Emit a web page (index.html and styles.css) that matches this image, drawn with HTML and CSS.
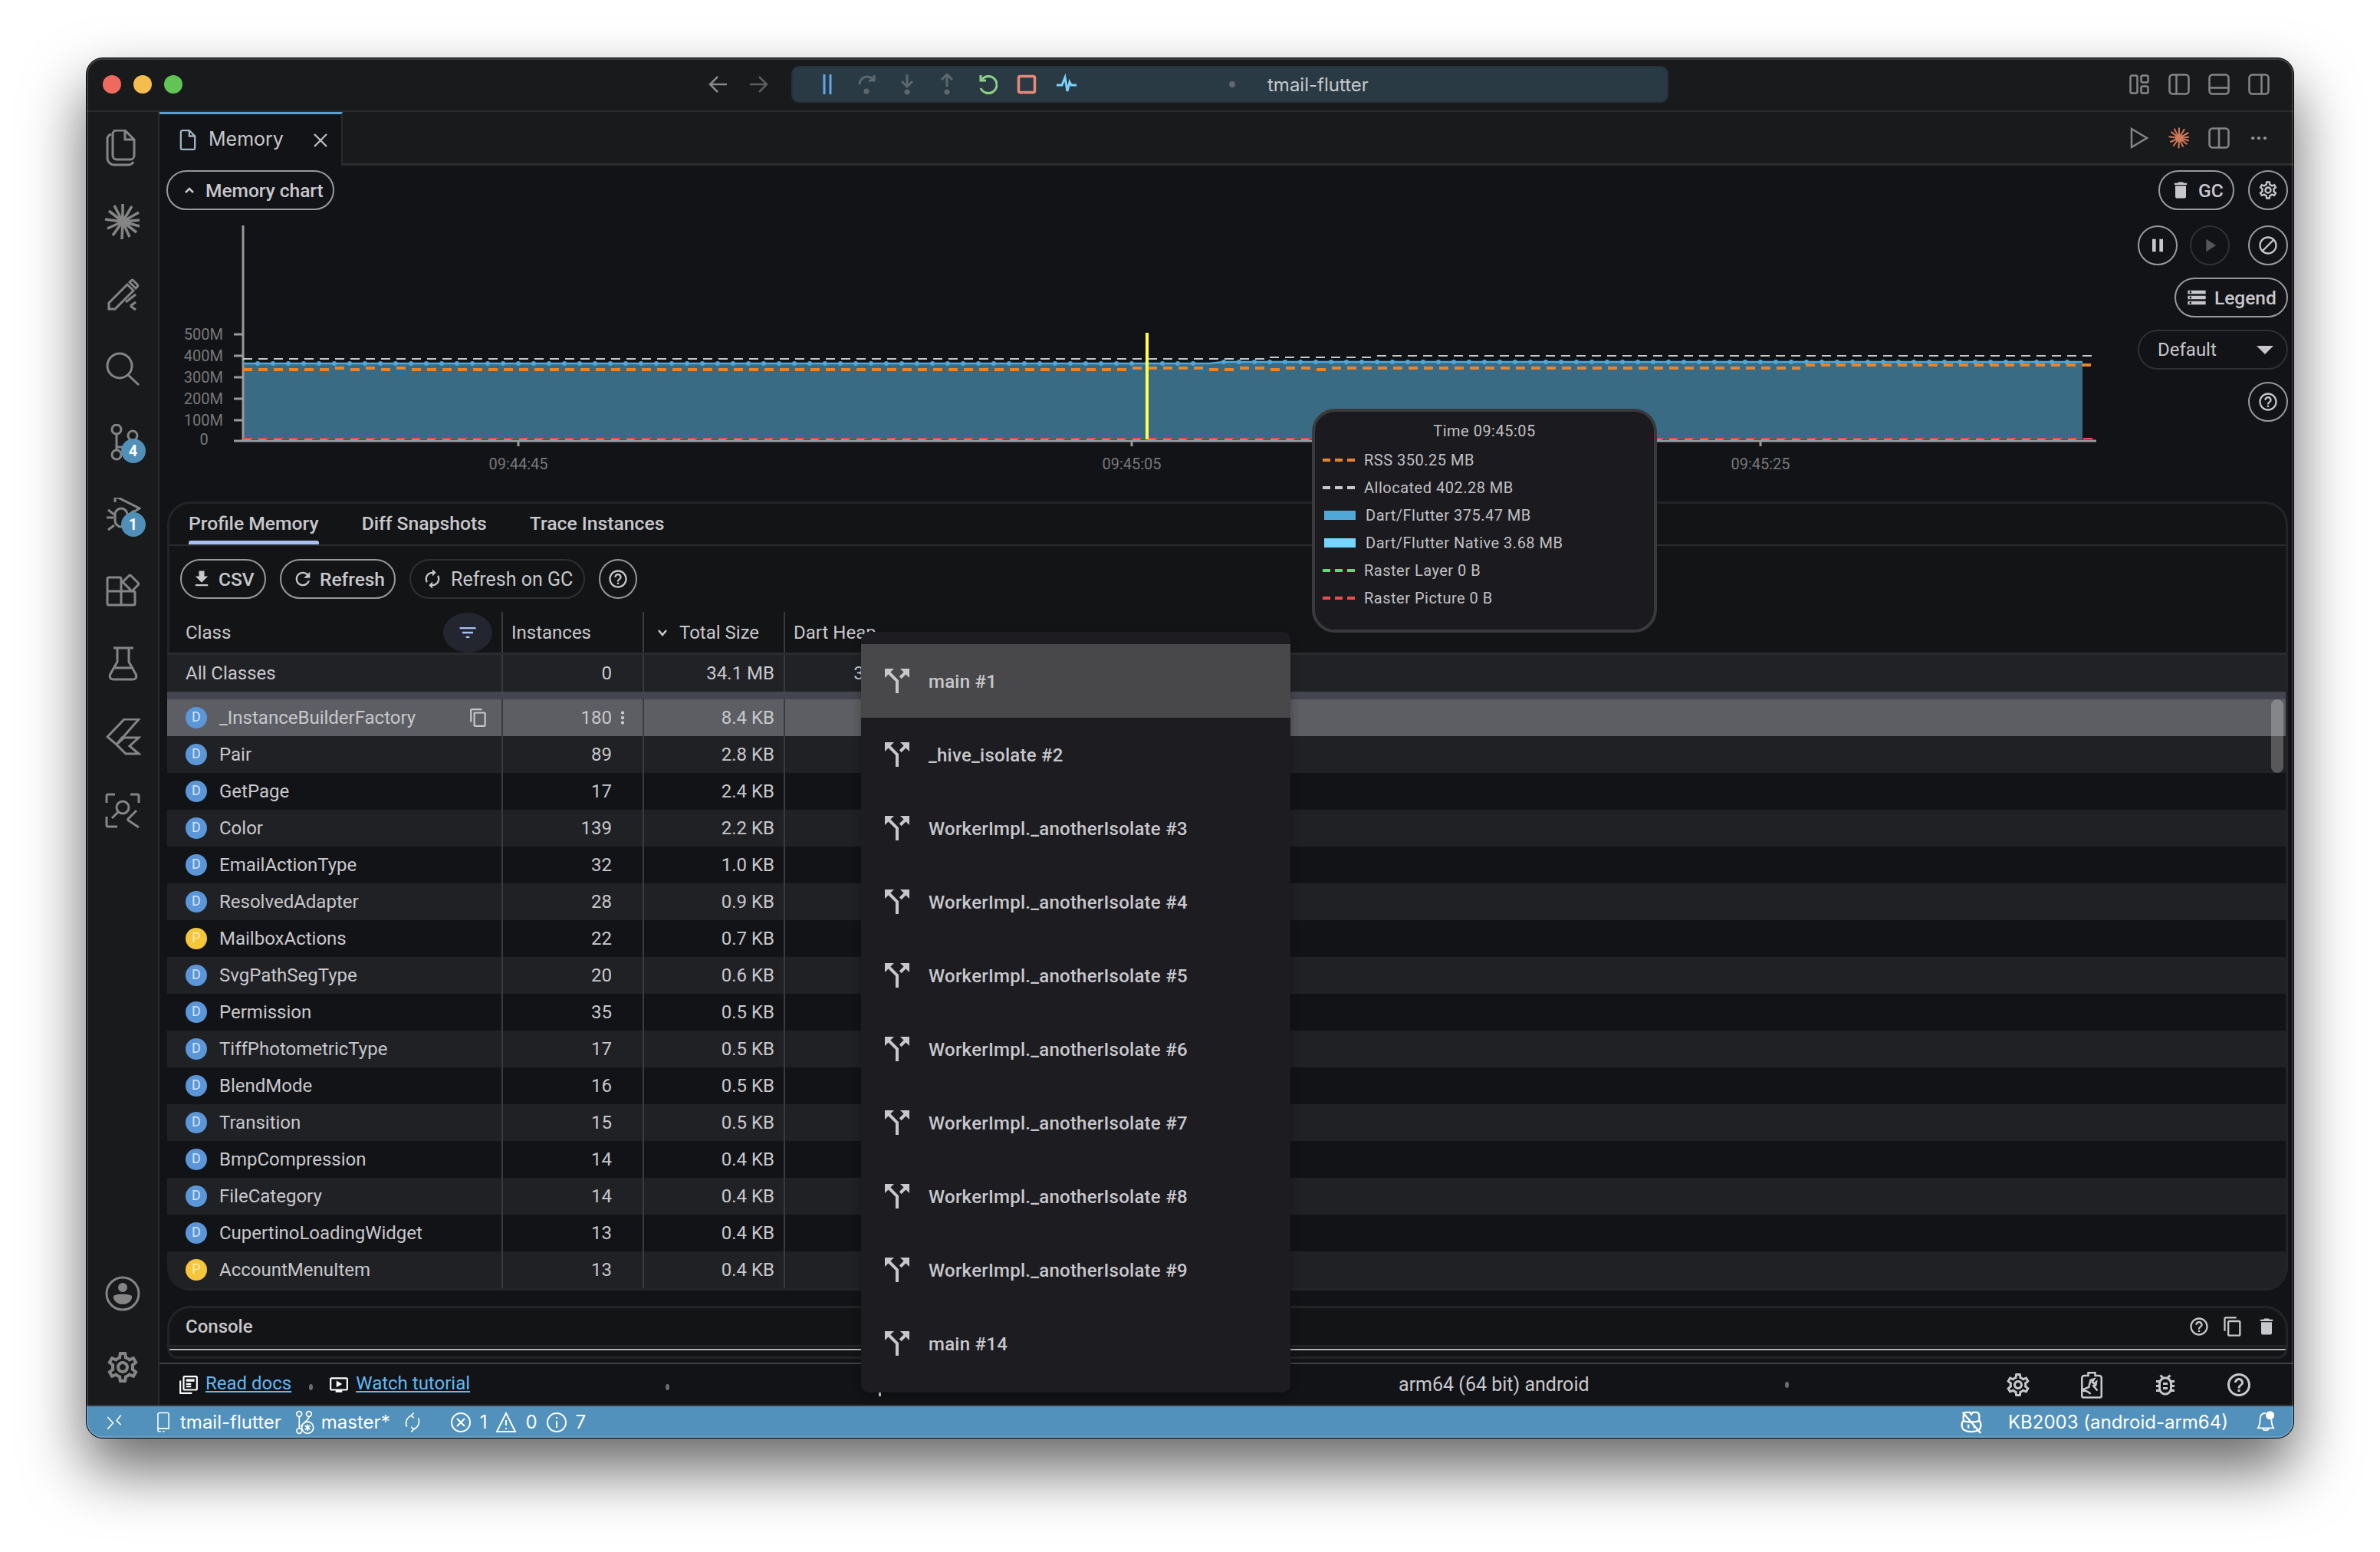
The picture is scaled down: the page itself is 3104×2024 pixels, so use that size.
FILE: index.html
```html
<!DOCTYPE html>
<html lang="en">
<head>
    <title>Memory - tmail-flutter</title>
    <link rel="stylesheet" href="styles.css">
</head>
<body>
    <!-- icon sprite -->
    <svg class="sprite" xmlns="http://www.w3.org/2000/svg">
        <symbol id="m-split" viewBox="0 0 24 24"><path d="M14 4l2.29 2.29-2.88 2.88 1.42 1.42 2.88-2.88L20 10V4zm-4 0H4v6l2.29-2.29 4.71 4.7V20h2v-8.41l-5.29-5.3z"/></symbol>
        <symbol id="m-download" viewBox="0 0 24 24"><path d="M19 9h-4V3H9v6H5l7 7 7-7zM5 18v2h14v-2H5z"/></symbol>
        <symbol id="m-refresh" viewBox="0 0 24 24"><path d="M17.65 6.35C16.2 4.9 14.21 4 12 4c-4.42 0-7.99 3.58-7.99 8s3.57 8 7.99 8c3.73 0 6.84-2.55 7.73-6h-2.08c-.82 2.33-3.04 4-5.65 4-3.31 0-6-2.69-6-6s2.69-6 6-6c1.66 0 3.14.69 4.22 1.78L13 11h7V4l-2.35 2.35z"/></symbol>
        <symbol id="m-renew" viewBox="0 0 24 24"><path d="M12 6v3l4-4-4-4v3c-4.42 0-8 3.58-8 8 0 1.57.46 3.03 1.24 4.26L6.7 14.8c-.45-.83-.7-1.79-.7-2.8 0-3.31 2.69-6 6-6zm6.76 1.74L17.3 9.2c.44.84.7 1.79.7 2.8 0 3.31-2.69 6-6 6v-3l-4 4 4 4v-3c4.42 0 8-3.58 8-8 0-1.57-.46-3.03-1.24-4.26z"/></symbol>
        <symbol id="m-help" viewBox="0 0 24 24"><path d="M11 18h2v-2h-2v2zm1-16C6.48 2 2 6.48 2 12s4.48 10 10 10 10-4.48 10-10S17.52 2 12 2zm0 18c-4.41 0-8-3.59-8-8s3.59-8 8-8 8 3.59 8 8-3.59 8-8 8zm0-14c-2.21 0-4 1.79-4 4h2c0-1.1.9-2 2-2s2 .9 2 2c0 2-3 1.75-3 5h2c0-2.25 3-2.5 3-5 0-2.21-1.79-4-4-4z"/></symbol>
        <symbol id="m-gear" viewBox="0 0 24 24"><path d="M19.43 12.98c.04-.32.07-.64.07-.98 0-.34-.03-.66-.07-.98l2.11-1.65c.19-.15.24-.42.12-.64l-2-3.46c-.09-.16-.26-.25-.44-.25-.06 0-.12.01-.17.03l-2.49 1c-.52-.4-1.08-.73-1.69-.98l-.38-2.65C14.46 2.18 14.25 2 14 2h-4c-.25 0-.46.18-.49.42l-.38 2.65c-.61.25-1.17.59-1.69.98l-2.49-1c-.06-.02-.12-.03-.18-.03-.17 0-.34.09-.43.25l-2 3.46c-.13.22-.07.49.12.64l2.11 1.65c-.04.32-.07.65-.07.98 0 .33.03.66.07.98l-2.11 1.65c-.19.15-.24.42-.12.64l2 3.46c.09.16.26.25.44.25.06 0 .12-.01.17-.03l2.49-1c.52.4 1.08.73 1.69.98l.38 2.65c.03.24.24.42.49.42h4c.25 0 .46-.18.49-.42l.38-2.65c.61-.25 1.17-.59 1.69-.98l2.49 1c.06.02.12.03.18.03.17 0 .34-.09.43-.25l2-3.46c.12-.22.07-.49-.12-.64l-2.11-1.65zm-1.98-1.71c.04.31.05.52.05.73 0 .21-.02.43-.05.73l-.14 1.13.89.7 1.08.84-.7 1.21-1.27-.51-1.04-.42-.9.68c-.43.32-.84.56-1.25.73l-1.06.43-.16 1.13-.2 1.35h-1.4l-.19-1.35-.16-1.13-1.06-.43c-.43-.18-.83-.41-1.23-.71l-.91-.7-1.06.43-1.27.51-.7-1.21 1.08-.84.89-.7-.14-1.13c-.03-.31-.05-.54-.05-.74s.02-.43.05-.73l.14-1.13-.89-.7-1.08-.84.7-1.21 1.27.51 1.04.42.9-.68c.43-.32.84-.56 1.25-.73l1.06-.43.16-1.13.2-1.35h1.39l.19 1.35.16 1.13 1.06.43c.43.18.83.41 1.23.71l.91.7 1.06-.43 1.27-.51.7 1.21-1.07.85-.89.7.14 1.13zM12 8c-2.21 0-4 1.79-4 4s1.79 4 4 4 4-1.79 4-4-1.79-4-4-4zm0 6c-1.1 0-2-.9-2-2s.9-2 2-2 2 .9 2 2-.9 2-2 2z"/></symbol>
        <symbol id="m-delete" viewBox="0 0 24 24"><path d="M6 19c0 1.1.9 2 2 2h8c1.1 0 2-.9 2-2V7H6v12zM19 4h-3.5l-1-1h-5l-1 1H5v2h14V4z"/></symbol>
        <symbol id="m-copy" viewBox="0 0 24 24"><path d="M16 1H4c-1.1 0-2 .9-2 2v14h2V3h12V1zm3 4H8c-1.1 0-2 .9-2 2v14c0 1.1.9 2 2 2h11c1.1 0 2-.9 2-2V7c0-1.1-.9-2-2-2zm0 16H8V7h11v14z"/></symbol>
        <symbol id="m-pause" viewBox="0 0 24 24"><path d="M6 19h4V5H6v14zm8-14v14h4V5h-4z"/></symbol>
        <symbol id="m-play" viewBox="0 0 24 24"><path d="M8 5v14l11-7z"/></symbol>
        <symbol id="m-block" viewBox="0 0 24 24"><path d="M12 2C6.48 2 2 6.48 2 12s4.48 10 10 10 10-4.48 10-10S17.52 2 12 2zM4 12c0-4.42 3.58-8 8-8 1.85 0 3.55.63 4.9 1.69L5.69 16.9C4.63 15.55 4 13.85 4 12zm8 8c-1.85 0-3.55-.63-4.9-1.69L18.31 7.1C19.37 8.45 20 10.15 20 12c0 4.42-3.58 8-8 8z"/></symbol>
        <symbol id="m-storage" viewBox="0 0 24 24"><path d="M2 20h20v-4H2v4zm2-3h2v2H4v-2zM2 4v4h20V4H2zm4 3H4V5h2v2zm-4 7h20v-4H2v4zm2-3h2v2H4v-2z"/></symbol>
        <symbol id="m-filter" viewBox="0 0 24 24"><path d="M10 18h4v-2h-4v2zM3 6v2h18V6H3zm3 7h12v-2H6v2z"/></symbol>
        <symbol id="m-more" viewBox="0 0 24 24"><path d="M12 8c1.1 0 2-.9 2-2s-.9-2-2-2-2 .9-2 2 .9 2 2 2zm0 2c-1.1 0-2 .9-2 2s.9 2 2 2 2-.9 2-2-.9-2-2-2zm0 6c-1.1 0-2 .9-2 2s.9 2 2 2 2-.9 2-2-.9-2-2-2z"/></symbol>
        <symbol id="m-docs" viewBox="0 0 24 24"><path d="M3 7H1v15c0 .6.4 1 1 1h14v-2H3V7zm18-6H7c-1.1 0-2 .9-2 2v14c0 1.1.9 2 2 2h14c1.1 0 2-.9 2-2V3c0-1.1-.9-2-2-2zm0 16H7V3h14v14zM9 5h10v3H9V5zm0 5h6v2H9v-2zm0 3h6v2H9v-2z"/></symbol>
        <symbol id="m-video" viewBox="0 0 24 24"><path d="M21 3H3c-1.1 0-2 .9-2 2v12c0 1.1.9 2 2 2h5v2h8v-2h5c1.1 0 2-.9 2-2V5c0-1.1-.9-2-2-2zm0 14H3V5h18v12zm-5-6l-7 4V7l7 4z"/></symbol>
        <symbol id="m-bug" viewBox="0 0 24 24"><path d="M20 8h-2.81c-.45-.78-1.07-1.45-1.82-1.96L17 4.41 15.59 3l-2.17 2.17C12.96 5.06 12.49 5 12 5c-.49 0-.96.06-1.41.17L8.41 3 7 4.41l1.62 1.63C7.88 6.55 7.26 7.22 6.81 8H4v2h2.09c-.05.33-.09.66-.09 1v1H4v2h2v1c0 .34.04.67.09 1H4v2h2.81c1.04 1.79 2.97 3 5.19 3s4.15-1.21 5.19-3H20v-2h-2.09c.05-.33.09-.66.09-1v-1h2v-2h-2v-1c0-.34-.04-.67-.09-1H20V8zm-4 7c0 2.21-1.79 4-4 4s-4-1.79-4-4v-4c0-2.21 1.79-4 4-4s4 1.79 4 4v4zm-6-1h4v2h-4v-2zm0-4h4v2h-4v-2z"/></symbol>
    </svg>

    <div class="window">
        <header class="titlebar">
            <div class="lights">
                <span class="light red"></span>
                <span class="light yellow"></span>
                <span class="light green"></span>
            </div>
            <div class="nav">
                <svg class="nav-arrow" viewBox="0 0 26 26"><path d="M24 13H3M12 3L2 13l10 10"/></svg>
                <svg class="nav-arrow dim" viewBox="0 0 26 26"><path d="M2 13h21M14 3l10 10-10 10"/></svg>
            </div>
            <div class="command-center">
                <div class="debug-tools">
                    <svg class="dbg" viewBox="0 0 28 28"><path class="blue" d="M10 1v26M18 1v26"/></svg>
                    <svg class="dbg" viewBox="0 0 28 28"><path class="off" d="M4 14a10 10 0 0 1 18-6M23 2v7h-7"/><circle class="off-dot" cx="13" cy="23" r="3.500"/></svg>
                    <svg class="dbg" viewBox="0 0 28 28"><path class="off" d="M14 1v15M7 10l7 7 7-7"/><circle class="off-dot" cx="14" cy="24" r="3.500"/></svg>
                    <svg class="dbg" viewBox="0 0 28 28"><path class="off" d="M14 17V2M7 8l7-7 7 7"/><circle class="off-dot" cx="14" cy="24" r="3.500"/></svg>
                    <svg class="dbg" viewBox="0 0 28 28"><path class="green-stroke" d="M8 7a11 11 0 1 1-2 12M6 2v7h7"/></svg>
                    <svg class="dbg" viewBox="0 0 28 28"><rect class="stop" x="3.500" y="3.500" width="21" height="21" rx="2"/></svg>
                    <svg class="dbg" viewBox="0 0 28 28"><path class="pulse" d="M1 15h7l4-10 3 18 3-12 2 4h7"/></svg>
                </div>
                <span class="cc-dot"></span>
                <span class="cc-title">tmail-flutter</span>
            </div>
            <div class="layout-icons">
                <svg class="win-icon" viewBox="0 0 28 28"><path d="M2.500 4.500a2 2 0 0 1 2-2h5a2 2 0 0 1 2 2v19a2 2 0 0 1-2 2h-5a2 2 0 0 1-2-2zM16.500 4.500a2 2 0 0 1 2-2h5a2 2 0 0 1 2 2v5a2 2 0 0 1-2 2h-5a2 2 0 0 1-2-2zM16.500 18.500a2 2 0 0 1 2-2h5a2 2 0 0 1 2 2v5a2 2 0 0 1-2 2h-5a2 2 0 0 1-2-2z"/></svg>
                <svg class="win-icon" viewBox="0 0 28 28"><rect x="1.500" y="1.500" width="25" height="25" rx="4"/><path d="M10.500 2v24"/></svg>
                <svg class="win-icon" viewBox="0 0 28 28"><rect x="1.500" y="1.500" width="25" height="25" rx="4"/><path d="M2 18.500h24"/></svg>
                <svg class="win-icon" viewBox="0 0 28 28"><rect x="1.500" y="1.500" width="25" height="25" rx="4"/><path d="M17.500 2v24"/></svg>
            </div>
        </header>

        <div class="workbench">
            <nav class="activity-bar">
                <svg class="act" viewBox="0 0 48 48"><path d="M16 1h11l12 12v21a5 5 0 0 1-5 5H16a5 5 0 0 1-5-5V6a5 5 0 0 1 5-5zM27 1v12h12M9 6a7 7 0 0 0-5 7v24a9 9 0 0 0 9 9h18a8 8 0 0 0 7-4"/></svg>
                <svg class="act" viewBox="0 0 48 48"><path class="rays" d="M24 24L46 22M24 24L45 12M24 24L36 4M24 24L24 1M24 24L13 3M24 24L6 10M24 24L1 21M24 24L4 33M24 24L11 42M24 24L23 47M24 24L33 44M24 24L42 38M24 24L46 30"/><circle class="fill-gray" cx="24" cy="24" r="6"/></svg>
                <svg class="act" viewBox="0 0 48 48"><path d="M6 42v-8L30 10l8 8-24 24zM33 7l2-2a2 2 0 0 1 3 0l5 5a2 2 0 0 1 0 3l-2 2zM28 33l13-10M34 38l7-5M34 38l7 5"/></svg>
                <svg class="act" viewBox="0 0 48 48"><circle cx="20" cy="20" r="16"/><path d="M31 32l14 13"/></svg>
                <div class="act-slot">
                    <svg class="act" viewBox="0 0 48 48"><circle cx="16" cy="7" r="6"/><circle cx="37" cy="15" r="6"/><circle cx="16" cy="40" r="6"/><path d="M16 13v21M16 30h14l5-9"/></svg>
                    <span class="act-badge">4</span>
                </div>
                <div class="act-slot">
                    <svg class="act" viewBox="0 0 48 48"><path d="M14 6V0h4l28 14-10 6M14 22a8 8 0 0 1 16 0v8a8 8 0 0 1-16 0zM3 26h9M5 16l8 6M5 42l8-6M32 22l7-5M33 26h8"/></svg>
                    <span class="act-badge">1</span>
                </div>
                <svg class="act" viewBox="0 0 48 48"><path d="M6 8h14a2 2 0 0 1 2 2v16H6a2 2 0 0 1-2-2V10a2 2 0 0 1 2-2zM4 26v16a2 2 0 0 0 2 2h16V26zM22 26h16a2 2 0 0 1 2 2v14a2 2 0 0 1-2 2H22zM24 14l8-8a2 2 0 0 1 3 0l9 9a2 2 0 0 1 0 3l-8 8z"/></svg>
                <svg class="act" viewBox="0 0 48 48"><path d="M12 4h26M17 4v18L8 38c-2 4 0 7 4 7h25c4 0 6-3 4-7l-9-16V4M13 30h24"/></svg>
                <svg class="act" viewBox="0 0 48 48"><path d="M4 24L26 1h19L16 34zM16 34l10-9h19L33 36l12 10H28zM16 34l8-10"/></svg>
                <svg class="act" viewBox="0 0 48 48"><path d="M3 14V5a2 2 0 0 1 2-2h9M34 3h9a2 2 0 0 1 2 2v9M3 32v11a2 2 0 0 0 2 2h12"/><circle cx="24" cy="20" r="8"/><path d="M18 26L10 34M42 24L30 36M36 40l-6-4M36 40l9 6"/></svg>
                <div class="act-spacer"></div>
                <svg class="act" viewBox="0 0 48 48"><circle cx="24" cy="24" r="21"/><circle class="fill-gray" cx="24" cy="16" r="6"/><path class="fill-gray" d="M12 27c4-3 20-3 24 0 1 6-5 11-12 11s-13-5-12-11z"/></svg>
                <svg class="act gear-act" viewBox="0 0 24 24"><use href="#m-gear"/></svg>
            </nav>

            <main class="editor">
                <div class="tab-row">
                    <div class="tab">
                        <svg class="tab-file" viewBox="0 0 24 30"><path d="M4 1h10l8 8v17a2 2 0 0 1-2 2H4a2 2 0 0 1-2-2V3a2 2 0 0 1 2-2zM14 1v8h8"/></svg>
                        <span class="tab-label">Memory</span>
                        <svg class="tab-close" viewBox="0 0 20 20"><path d="M2 2l16 16M18 2L2 18"/></svg>
                    </div>
                    <div class="tab-actions">
                        <svg class="win-icon" viewBox="0 0 28 28"><path d="M4 2v24l20-12z"/></svg>
                        <svg class="star-orange" viewBox="0 0 48 48"><path d="M24 24L46 22M24 24L45 12M24 24L36 4M24 24L24 1M24 24L13 3M24 24L6 10M24 24L1 21M24 24L4 33M24 24L11 42M24 24L23 47M24 24L33 44M24 24L42 38M24 24L46 30"/><circle cx="24" cy="24" r="7"/></svg>
                        <svg class="win-icon" viewBox="0 0 28 28"><rect x="1.500" y="1.500" width="25" height="25" rx="4"/><path d="M14 2v24"/></svg>
                        <span class="more-dots">···</span>
                    </div>
                </div>

                <section class="chart-section">
                    <div class="chart-main">
                        <button class="pill chart-toggle">
                            <svg class="chev" viewBox="0 0 16 16"><path d="M3 11l5-5 5 5"/></svg>
                            Memory chart
                        </button>
                        <svg class="chart" viewBox="217 294 2565 350" width="2565" height="350">
                            <polygon class="area" points="317,474 1577,474 1595,472 2716,472 2716,573 317,573"/>
                            <!-- axes -->
                            <path class="axis" d="M317 294V576M305 575H2734M305 436h12M305 464h12M305 492h12M305 520h12M305 548h12"/>
                            <path class="xtick" d="M676 576v6M1476 576v6M2296 576v6"/>
                            <!-- series -->
                            <path class="dash-white" d="M317 468H1656M1656 466H1796M1796 464H2728"/>
                            <path class="line-blue" d="M317 474H1577L1595 472H2716"/>
                            <path class="dots-blue" d="M336 474H1576M1596 472H2716"/>
                            <path class="dash-orange" d="M317 482H437M437 480H457M457 482H477M477 480H497M497 482H517M517 480H537M537 482H1477M1477 480H1577M1577 482H1617M1617 480H1657M1657 482H1677M1677 480H1717M1717 482H1737M1737 480H2348M2355 476H2728"/>
                            <path class="dash-native" d="M317 573H2716"/>
                            <path class="dash-red" d="M317 572H2734"/>
                            <rect class="hover-line" x="1494" y="434" width="4" height="139"/>
                            <!-- labels -->
                            <text class="tick-label" x="291" y="443" text-anchor="end">500M</text>
                            <text class="tick-label" x="291" y="471" text-anchor="end">400M</text>
                            <text class="tick-label" x="291" y="499" text-anchor="end">300M</text>
                            <text class="tick-label" x="291" y="527" text-anchor="end">200M</text>
                            <text class="tick-label" x="291" y="555" text-anchor="end">100M</text>
                            <text class="tick-label" x="266" y="580" text-anchor="middle">0</text>
                            <text class="tick-label" x="676" y="612" text-anchor="middle">09:44:45</text>
                            <text class="tick-label" x="1476" y="612" text-anchor="middle">09:45:05</text>
                            <text class="tick-label" x="2296" y="612" text-anchor="middle">09:45:25</text>
                        </svg>
                    </div>
                    <div class="chart-controls">
                        <div class="ctrl-row">
                            <button class="pill gc-btn"><svg class="m-icon" viewBox="0 0 24 24"><use href="#m-delete"/></svg>GC</button>
                            <button class="round"><svg class="m-icon" viewBox="0 0 24 24"><use href="#m-gear"/></svg></button>
                        </div>
                        <div class="ctrl-row three">
                            <button class="round"><svg class="m-icon" viewBox="0 0 24 24"><use href="#m-pause"/></svg></button>
                            <button class="round disabled"><svg class="m-icon" viewBox="0 0 24 24"><use href="#m-play"/></svg></button>
                            <button class="round last"><svg class="m-icon" viewBox="0 0 24 24"><use href="#m-block"/></svg></button>
                        </div>
                        <div class="ctrl-row">
                            <button class="pill legend-btn"><svg class="m-icon" viewBox="0 0 24 24"><use href="#m-storage"/></svg>Legend</button>
                        </div>
                        <div class="ctrl-row">
                            <div class="dropdown"><span>Default</span><span class="caret"></span></div>
                        </div>
                        <div class="ctrl-row">
                            <button class="round"><svg class="m-icon" viewBox="0 0 24 24"><use href="#m-help"/></svg></button>
                        </div>
                    </div>
                </section>

                <section class="panel profile">
                    <div class="panel-tabs">
                        <span class="panel-tab active">Profile Memory</span>
                        <span class="panel-tab">Diff Snapshots</span>
                        <span class="panel-tab">Trace Instances</span>
                    </div>
                    <div class="toolbar">
                        <button class="pill csv-btn"><svg class="m-icon" viewBox="0 0 24 24"><use href="#m-download"/></svg>CSV</button>
                        <button class="pill refresh-btn"><svg class="m-icon" viewBox="0 0 24 24"><use href="#m-refresh"/></svg>Refresh</button>
                        <button class="pill dark-pill gcr-btn"><svg class="m-icon" viewBox="0 0 24 24"><use href="#m-renew"/></svg>Refresh on GC</button>
                        <button class="round"><svg class="m-icon" viewBox="0 0 24 24"><use href="#m-help"/></svg></button>
                    </div>
                    <div class="table">
                        <div class="row head">
                            <div class="cell class-cell">Class<span class="filter-btn"><svg class="m-icon" viewBox="0 0 24 24"><use href="#m-filter"/></svg></span></div>
                            <div class="cell head-left">Instances</div>
                            <div class="cell head-left sort"><svg class="sort-chev" viewBox="0 0 16 16"><path d="M3 5l5 6 5-6"/></svg>Total Size</div>
                            <div class="cell head-left">Dart Heap</div>
                        </div>
                        <div class="row total">
                            <div class="cell class-cell">All Classes</div>
                            <div class="cell num">0</div>
                            <div class="cell num">34.1 MB</div>
                            <div class="cell num heap">34.1 MB</div>
                        </div>
                        <div class="band"></div>
                        <div class="rows">
                            <div class="scroll-thumb"></div>
                            <div class="row selected">
                                <div class="cell class-cell"><span class="lib dart">D</span>_InstanceBuilderFactory<svg class="copy-icon" viewBox="0 0 24 24"><use href="#m-copy"/></svg></div>
                                <div class="cell num">180<svg class="kebab" viewBox="0 0 24 24"><use href="#m-more"/></svg></div>
                                <div class="cell num">8.4 KB</div>
                                <div class="cell"></div>
                            </div>
                            <div class="row"><div class="cell class-cell"><span class="lib dart">D</span>Pair</div><div class="cell num">89</div><div class="cell num">2.8 KB</div><div class="cell"></div></div>
                            <div class="row"><div class="cell class-cell"><span class="lib dart">D</span>GetPage</div><div class="cell num">17</div><div class="cell num">2.4 KB</div><div class="cell"></div></div>
                            <div class="row"><div class="cell class-cell"><span class="lib dart">D</span>Color</div><div class="cell num">139</div><div class="cell num">2.2 KB</div><div class="cell"></div></div>
                            <div class="row"><div class="cell class-cell"><span class="lib dart">D</span>EmailActionType</div><div class="cell num">32</div><div class="cell num">1.0 KB</div><div class="cell"></div></div>
                            <div class="row"><div class="cell class-cell"><span class="lib dart">D</span>ResolvedAdapter</div><div class="cell num">28</div><div class="cell num">0.9 KB</div><div class="cell"></div></div>
                            <div class="row"><div class="cell class-cell"><span class="lib pkg">P</span>MailboxActions</div><div class="cell num">22</div><div class="cell num">0.7 KB</div><div class="cell"></div></div>
                            <div class="row"><div class="cell class-cell"><span class="lib dart">D</span>SvgPathSegType</div><div class="cell num">20</div><div class="cell num">0.6 KB</div><div class="cell"></div></div>
                            <div class="row"><div class="cell class-cell"><span class="lib dart">D</span>Permission</div><div class="cell num">35</div><div class="cell num">0.5 KB</div><div class="cell"></div></div>
                            <div class="row"><div class="cell class-cell"><span class="lib dart">D</span>TiffPhotometricType</div><div class="cell num">17</div><div class="cell num">0.5 KB</div><div class="cell"></div></div>
                            <div class="row"><div class="cell class-cell"><span class="lib dart">D</span>BlendMode</div><div class="cell num">16</div><div class="cell num">0.5 KB</div><div class="cell"></div></div>
                            <div class="row"><div class="cell class-cell"><span class="lib dart">D</span>Transition</div><div class="cell num">15</div><div class="cell num">0.5 KB</div><div class="cell"></div></div>
                            <div class="row"><div class="cell class-cell"><span class="lib dart">D</span>BmpCompression</div><div class="cell num">14</div><div class="cell num">0.4 KB</div><div class="cell"></div></div>
                            <div class="row"><div class="cell class-cell"><span class="lib dart">D</span>FileCategory</div><div class="cell num">14</div><div class="cell num">0.4 KB</div><div class="cell"></div></div>
                            <div class="row"><div class="cell class-cell"><span class="lib dart">D</span>CupertinoLoadingWidget</div><div class="cell num">13</div><div class="cell num">0.4 KB</div><div class="cell"></div></div>
                            <div class="row"><div class="cell class-cell"><span class="lib pkg">P</span>AccountMenuItem</div><div class="cell num">13</div><div class="cell num">0.4 KB</div><div class="cell"></div></div>
                        </div>
                    </div>
                </section>

                <section class="panel console">
                    <div class="console-head">
                        <span class="console-title">Console</span>
                        <div class="console-icons">
                            <svg class="m-icon" viewBox="0 0 24 24"><use href="#m-help"/></svg>
                            <svg class="m-icon" viewBox="0 0 24 24"><use href="#m-copy"/></svg>
                            <svg class="m-icon" viewBox="0 0 24 24"><use href="#m-delete"/></svg>
                        </div>
                    </div>
                    <div class="console-rule"></div>
                </section>

                <footer class="devtools-footer">
                    <svg class="foot-icon" viewBox="0 0 24 24"><use href="#m-docs"/></svg>
                    <a class="foot-link docs">Read docs</a>
                    <span class="foot-dot d1"></span>
                    <svg class="foot-icon" viewBox="0 0 24 24"><use href="#m-video"/></svg>
                    <a class="foot-link tutorial">Watch tutorial</a>
                    <span class="foot-dot d2"></span>
                    <span class="foot-tick"></span>
                    <span class="foot-device">arm64 (64 bit) android</span>
                    <span class="foot-dot d3"></span>
                    <div class="foot-tools">
                        <svg class="m-icon" viewBox="0 0 24 24"><use href="#m-gear"/></svg>
                        <svg class="tool-outline" viewBox="0 0 24 24"><path d="M9 1.500h6v2.500h3.500a2 2 0 0 1 2 2v15.500a1.500 1.500 0 0 1-1.500 1.500H5a1.500 1.500 0 0 1-1.500-1.500V6a2 2 0 0 1 2-2H9zM3.500 16.500l6-2.500 1.500-6 3-1-1.500 2.500 1.500 1.500 2-1.500-.5 3-2 .5 3.500 4M3.500 17c3 0 6 1 7.500 3"/></svg>
                        <svg class="m-icon" viewBox="0 0 24 24"><use href="#m-bug"/></svg>
                        <svg class="m-icon" viewBox="0 0 24 24"><use href="#m-help"/></svg>
                    </div>
                </footer>
            </main>
        </div>

        <div class="statusbar">
            <svg class="st-icon remote" viewBox="0 0 28 28"><path d="M3 5l9 10-9 10M25 2l-7 9 7 7"/></svg>
            <svg class="st-icon device" viewBox="0 0 28 34"><path d="M8 1h13a2 2 0 0 1 2 2v24H5V3a3 3 0 0 1 3-2zM5 27v3a2 2 0 0 0 2 2h3M13 32h3"/></svg>
            <span class="st-text project">tmail-flutter</span>
            <svg class="st-icon branch" viewBox="0 0 30 38"><circle cx="7" cy="6" r="4"/><circle cx="22" cy="6" r="4"/><circle cx="7" cy="32" r="4"/><path d="M7 10v18M22 10c0 6-8 8-13 16"/><circle class="star-bg" cx="20" cy="27" r="9"/><path class="star-cut" d="M20 22v10M16 24l8 6M24 24l-8 6"/></svg>
            <span class="st-text branch-name">master*</span>
            <svg class="st-icon sync" viewBox="0 0 28 34"><path d="M16 2l-4 4 4 4M5 24A13 13 0 0 1 13 6M12 32l4-4-4-4M23 10a13 13 0 0 1-8 18"/></svg>
            <svg class="st-icon problem p-err" viewBox="0 0 28 28"><circle cx="14" cy="14" r="12"/><path d="M9 9l10 10M19 9L9 19"/></svg>
            <span class="st-text count">1</span>
            <svg class="st-icon problem" viewBox="0 0 28 28"><path d="M14 2l12 24H2zM14 11v7M14 21v2"/></svg>
            <span class="st-text count">0</span>
            <svg class="st-icon problem" viewBox="0 0 28 28"><circle cx="14" cy="14" r="12"/><path d="M14 12v9M14 7v2"/></svg>
            <span class="st-text count">7</span>
            <div class="st-right">
                <svg class="st-icon copilot" viewBox="0 0 32 32"><path d="M9 2h5l2 3 2-3h5c3 0 4 3 4 6v6c3 2 3 9 0 12-6 4-16 4-22 0-3-3-3-10 0-12V8c0-3 1-6 4-6zM4 2l25 29M5 14c6 2 16 2 22 0M12 19v5M20 19v5"/></svg>
                <span class="st-text device-name">KB2003 (android-arm64)</span>
                <svg class="st-icon bell" viewBox="0 0 28 34"><path d="M14 4C8 4 6 8 6 13c0 6-1 9-3 12h22c-2-3-3-6-3-12M10 25c0 4 8 4 8 0"/><circle class="bell-dot" cx="20" cy="7" r="6"/></svg>
            </div>
        </div>

        <!-- floating things -->
        <div class="chart-tooltip">
            <div class="tip-time">Time 09:45:05</div>
            <div class="tip-row"><span class="tip-dash orange"></span>RSS 350.25 MB</div>
            <div class="tip-row"><span class="tip-dash gray"></span>Allocated 402.28 MB</div>
            <div class="tip-row"><span class="tip-block blue"></span>Dart/Flutter 375.47 MB</div>
            <div class="tip-row"><span class="tip-block sky"></span>Dart/Flutter Native 3.68 MB</div>
            <div class="tip-row"><span class="tip-dash mint"></span>Raster Layer 0 B</div>
            <div class="tip-row"><span class="tip-dash coral"></span>Raster Picture 0 B</div>
        </div>

        <div class="isolate-menu">
            <div class="iso-item on"><svg class="iso-icon" viewBox="0 0 24 24"><use href="#m-split"/></svg>main #1</div>
            <div class="iso-item"><svg class="iso-icon" viewBox="0 0 24 24"><use href="#m-split"/></svg>_hive_isolate #2</div>
            <div class="iso-item"><svg class="iso-icon" viewBox="0 0 24 24"><use href="#m-split"/></svg>WorkerImpl._anotherIsolate #3</div>
            <div class="iso-item"><svg class="iso-icon" viewBox="0 0 24 24"><use href="#m-split"/></svg>WorkerImpl._anotherIsolate #4</div>
            <div class="iso-item"><svg class="iso-icon" viewBox="0 0 24 24"><use href="#m-split"/></svg>WorkerImpl._anotherIsolate #5</div>
            <div class="iso-item"><svg class="iso-icon" viewBox="0 0 24 24"><use href="#m-split"/></svg>WorkerImpl._anotherIsolate #6</div>
            <div class="iso-item"><svg class="iso-icon" viewBox="0 0 24 24"><use href="#m-split"/></svg>WorkerImpl._anotherIsolate #7</div>
            <div class="iso-item"><svg class="iso-icon" viewBox="0 0 24 24"><use href="#m-split"/></svg>WorkerImpl._anotherIsolate #8</div>
            <div class="iso-item"><svg class="iso-icon" viewBox="0 0 24 24"><use href="#m-split"/></svg>WorkerImpl._anotherIsolate #9</div>
            <div class="iso-item"><svg class="iso-icon" viewBox="0 0 24 24"><use href="#m-split"/></svg>main #14</div>
        </div>
    </div>
</body>
</html>
```

FILE: styles.css
```css
* {
    box-sizing: border-box;
}
html, body {
    margin: 0;
    height: 2024px;
    overflow: hidden;
}
body {
    background-color: white;
    padding: 75px 112px 0;
    font-family: 'Roboto', sans-serif;
    font-size: 24px;
    color: #c8c8cc;
}
.sprite {
    display: none;
}
button {
    font: inherit;
    color: inherit;
    background: none;
    padding: 0;
}

/* Whole app window */
.window {
    position: relative;
    width: 2880px;
    height: 1801px;
    border-radius: 22px;
    background-color: #191a1c;
    display: flex;
    flex-direction: column;
    border: 1px solid #000;
    box-shadow: 0 40px 80px rgba(0, 0, 0, 0.6);
}
/* thin light edge on top of everything */
.window::after {
    content: "";
    position: absolute;
    inset: 0;
    border: 2px solid rgba(255, 255, 255, 0.16);
    border-radius: 21px;
    pointer-events: none;
    z-index: 10;
}

/* Title bar */
.titlebar {
    height: 70px;
    flex: none;
    display: flex;
    align-items: center;
    border-bottom: 2px solid #2a2b2d;
    border-radius: 21px 21px 0 0;
    background-color: #191a1c;
}
.lights {
    display: flex;
    gap: 16px;
    margin-left: 21px;
}
.light {
    width: 24px;
    height: 24px;
    border-radius: 50%;
}
.light.red { background-color: #ee6a5f; }
.light.yellow { background-color: #f5bd4f; }
.light.green { background-color: #61c454; }
.nav {
    display: flex;
    gap: 26px;
    margin-left: 686px;
}
.nav-arrow {
    width: 26px;
    height: 26px;
    fill: none;
    stroke: #8a8a8a;
    stroke-width: 2.500;
}
.nav-arrow.dim {
    stroke: #5e5e5e;
}
.command-center {
    width: 1144px;
    height: 48px;
    margin-left: 30px;
    display: flex;
    align-items: center;
    background-color: #2a3a44;
    border-radius: 10px;
    border: 2px solid #25323b;
}
.debug-tools {
    display: flex;
    gap: 24px;
    margin-left: 31px;
}
.dbg {
    width: 28px;
    height: 28px;
    fill: none;
    stroke-width: 3;
}
.dbg .blue { stroke: #61a8e8; }
.dbg .off { stroke: #5d676d; }
.dbg .off-dot { fill: #5d676d; }
.dbg .green-stroke { stroke: #8fd08a; }
.dbg .stop { stroke: #e88a78; stroke-width: 3.500; }
.dbg .pulse { stroke: #7ad2f8; stroke-width: 3; }
.cc-dot {
    width: 8px;
    height: 8px;
    border-radius: 50%;
    background-color: #5d676d;
    margin-left: 198px;
}
.cc-title {
    margin-left: 42px;
    font-family: 'Inter', sans-serif;
    font-size: 24px;
    color: #c4c8cc;
}
.layout-icons {
    display: flex;
    gap: 24px;
    margin-left: auto;
    margin-right: 31px;
}
.win-icon {
    width: 28px;
    height: 28px;
    fill: none;
    stroke: #858585;
    stroke-width: 2.500;
    display: block;
}

/* Sidebar + editor */
.workbench {
    flex: 1;
    min-height: 0;
    display: flex;
}
.activity-bar {
    width: 95px;
    flex: none;
    display: flex;
    flex-direction: column;
    align-items: center;
    padding-top: 23px;
    gap: 48px;
    border-right: 2px solid #2a2b2d;
    padding-bottom: 25px;
}
.act {
    width: 48px;
    height: 48px;
    flex: none;
    fill: none;
    stroke: #858585;
    stroke-width: 3;
    display: block;
}
.act .rays { stroke-width: 3.500; }
.act .fill-gray { fill: #858585; stroke: none; }
.gear-act {
    fill: #858585;
    stroke: none;
}
.act-slot {
    position: relative;
    width: 48px;
    height: 48px;
}
.act-badge {
    position: absolute;
    left: 22px;
    top: 19px;
    width: 32px;
    height: 32px;
    border-radius: 50%;
    background-color: #4f8fb8;
    color: white;
    font-size: 20px;
    font-weight: 700;
    text-align: center;
    line-height: 32px;
}
.act-spacer {
    flex: 1;
}
.editor {
    flex: 1;
    min-width: 0;
    display: flex;
    flex-direction: column;
    background-color: #121316;
}

/* Tab strip */
.tab-row {
    height: 70px;
    flex: none;
    display: flex;
    background-color: #191a1c;
    border-bottom: 3px solid #2c2d2f;
}
.tab {
    width: 239px;
    height: 70px;
    flex: none;
    display: flex;
    align-items: center;
    background-color: #111316;
    border-top: 3px solid #5a9fd0;
    border-right: 2px solid #2a2b2d;
    padding-left: 26px;
}
.tab-file {
    width: 22px;
    height: 28px;
    fill: none;
    stroke: #9fb4c0;
    stroke-width: 2.500;
}
.tab-label {
    font-family: 'Inter', sans-serif;
    font-size: 25px;
    margin: 0 0 3px 16px;
    color: #c8c8cc;
}
.tab-close {
    width: 20px;
    height: 20px;
    margin-left: auto;
    margin-right: 17px;
    fill: none;
    stroke: #c0c0c0;
    stroke-width: 2.200;
}
.tab-actions {
    margin-left: auto;
    margin-right: 31px;
    display: flex;
    align-items: center;
    gap: 24px;
}
.star-orange {
    width: 28px;
    height: 34px;
    fill: #d07a58;
    stroke: #d07a58;
    stroke-width: 3.500;
}
.more-dots {
    width: 28px;
    text-align: center;
    color: #9a9a9a;
    font-size: 26px;
    font-weight: 700;
}

/* Chart */
.chart-section {
    height: 438px;
    flex: none;
    display: flex;
    justify-content: space-between;
}
.chart-main {
    padding: 6px 0 0 9px;
}
.pill {
    height: 52px;
    display: inline-flex;
    align-items: center;
    border: 2px solid #99999c;
    border-radius: 26px;
    font-weight: 500;
    font-size: 24.500px;
    color: #c8c8cc;
}
.round {
    width: 52px;
    height: 52px;
    display: inline-flex;
    align-items: center;
    justify-content: center;
    border: 2px solid #99999c;
    border-radius: 50%;
}
.round.disabled {
    border-color: #2f3033;
}
.round.disabled .m-icon {
    fill: #55565a;
}
.round.last {
    margin-left: 8px;
}
.m-icon {
    width: 28px;
    height: 28px;
    fill: #c8c8cc;
    flex: none;
    display: block;
}
.chart-toggle {
    width: 219px;
    padding-left: 20px;
    gap: 13px;
}
.chev {
    width: 16px;
    height: 16px;
    fill: none;
    stroke: #c8c8cc;
    stroke-width: 2.500;
}
.chart {
    display: block;
    margin-top: 20px;
}
.area { fill: #3a6b85; }
.axis { fill: none; stroke: #9a9a9a; stroke-width: 3; }
.xtick { fill: none; stroke: #9a9a9a; stroke-width: 3; }
.dash-white { fill: none; stroke: #c8c8c8; stroke-width: 2; stroke-dasharray: 12 8; }
.line-blue { fill: none; stroke: #4fa8d8; stroke-width: 2.500; }
.dots-blue { fill: none; stroke: #4fa8d8; stroke-width: 6; stroke-linecap: round; stroke-dasharray: 0 20; }
.dash-orange { fill: none; stroke: #e8842c; stroke-width: 4; stroke-dasharray: 12 8; }
.dash-native { fill: none; stroke: #5ab4e0; stroke-width: 3; stroke-dasharray: 10 10; }
.dash-red { fill: none; stroke: #e85050; stroke-width: 2; stroke-dasharray: 12 8; }
.hover-line { fill: #ffff4d; }
.tick-label { fill: #77787b; font-size: 20px; }

.chart-controls {
    width: 204px;
    margin-right: 7px;
    padding-top: 6px;
    display: flex;
    flex-direction: column;
    gap: 16px;
}
.ctrl-row {
    display: flex;
    justify-content: flex-end;
    gap: 18px;
}
.ctrl-row.three {
    gap: 16px;
    margin-top: 4px;
}
.gc-btn {
    width: 99px;
    padding-left: 13px;
    gap: 9px;
}
.legend-btn {
    width: 148px;
    padding-left: 13px;
    gap: 9px;
}
.dropdown {
    width: 196px;
    height: 52px;
    border: 2px solid #2f3033;
    border-radius: 26px;
    display: flex;
    align-items: center;
    justify-content: space-between;
    padding: 0 17px 0 24px;
    font-size: 24px;
}
.caret {
    width: 0;
    height: 0;
    border-left: 11px solid transparent;
    border-right: 11px solid transparent;
    border-top: 11px solid #c8c8cc;
}

/* Bordered panels */
.panel {
    margin: 0 7px 0 10px;
    border: 3px solid #232427;
    flex: none;
    overflow: hidden;
    background-color: #131416;
}
.profile {
    height: 1029px;
    border-radius: 30px;
    overflow: clip;
    overflow-clip-margin: border-box;
}
.panel-tabs {
    height: 55px;
    display: flex;
    border-bottom: 2px solid #2a2b2e;
    padding-left: 25px;
    gap: 56px;
}
.panel-tab {
    position: relative;
    font-weight: 500;
    font-size: 24.700px;
    padding-top: 11px;
    color: #c8c8cc;
}
.panel-tab.active::after {
    content: "";
    position: absolute;
    left: 0;
    right: 0;
    bottom: 0;
    height: 5px;
    border-radius: 3px 3px 0 0;
    background-color: #a9c0f5;
}
.toolbar {
    height: 86px;
    display: flex;
    align-items: center;
    padding: 0 0 0 14px;
    gap: 18px;
}
.csv-btn {
    width: 112px;
    padding-left: 12px;
    gap: 8px;
}
.refresh-btn {
    width: 151px;
    padding-left: 14px;
    gap: 8px;
}
.dark-pill {
    border-color: #2f3033;
    font-weight: 400;
    font-size: 25px;
}
.gcr-btn {
    width: 229px;
    padding-left: 14px;
    gap: 10px;
}
.toolbar .round {
    width: 50px;
}

/* Table */
.table {
    margin-left: -3px;
}
.row {
    display: grid;
    grid-template-columns: 436px 184px 184px 1fr;
    height: 48px;
    background-color: #121316;
}
.rows .row:nth-child(odd) {
    background-color: #202124;
}
.rows .row.selected {
    background-color: #5d5e63;
}
.cell {
    display: flex;
    align-items: center;
    padding: 0 12px;
    border-left: 2px solid #3a3b3f;
    white-space: nowrap;
    color: #c8c8cc;
    font-size: 24px;
}
.class-cell {
    border-left: none;
    padding-left: 24px;
    position: relative;
}
.num {
    justify-content: flex-end;
}
.row .cell:nth-child(2).num { padding-right: 40px; }
.row.head {
    height: 56px;
    background-color: transparent;
    border-bottom: 3px solid #2a2b2e;
}
.head-left { padding-left: 11px; }
.sort { padding-left: 16px; }
.sort-chev {
    width: 16px;
    height: 16px;
    fill: none;
    stroke: #c8c8cc;
    stroke-width: 2.500;
    margin-right: 14px;
}
.filter-btn {
    margin-left: auto;
    width: 64px;
    height: 52px;
    border-radius: 50%;
    background-color: #23262e;
    display: flex;
    align-items: center;
    justify-content: center;
}
.filter-btn .m-icon { fill: #a9c0f5; }
.heap { width: 192px; }
.row.total { background-color: #212226; }
.band {
    height: 10px;
    background-color: #434650;
}
.rows {
    position: relative;
}
.scroll-thumb {
    position: absolute;
    right: 3px;
    top: 0;
    width: 16px;
    height: 96px;
    border-radius: 8px;
    background-color: rgba(255, 255, 255, 0.25);
    z-index: 2;
}
.lib {
    width: 28px;
    height: 28px;
    border-radius: 50%;
    display: inline-flex;
    align-items: center;
    justify-content: center;
    padding-bottom: 3px;
    font-size: 18px;
    margin-right: 16px;
    flex: none;
}
.lib.dart { background-color: #5a96d8; color: #d4e4f8; }
.lib.pkg { background-color: #f5c63c; color: #fbe9ad; }
.copy-icon {
    width: 26px;
    height: 26px;
    fill: #c8c8cc;
    position: absolute;
    right: 17px;
    top: 11px;
}
.kebab {
    width: 26px;
    height: 26px;
    fill: #c8c8cc;
    position: absolute;
    margin-right: -27px;
}

/* Console */
.console {
    height: 69px;
    margin-top: 20px;
    border-radius: 30px 30px 14px 14px;
}
.console-head {
    height: 51px;
    display: flex;
    align-items: center;
    justify-content: space-between;
    padding: 0 11px 0 21px;
    border-bottom: 3px solid #232427;
}
.console-title {
    font-weight: 500;
    font-size: 24px;
}
.console-icons {
    display: flex;
    gap: 16px;
}
.console-rule {
    height: 2px;
    margin-top: 2px;
    background-color: #b4b4b4;
}

/* DevTools footer */
.devtools-footer {
    flex: 1;
    margin-top: 5px;
    display: flex;
    align-items: center;
    border-top: 2px solid #3f4045;
    padding-left: 25px;
    position: relative;
}
.foot-icon {
    width: 26px;
    height: 26px;
    fill: white;
    flex: none;
}
.foot-link {
    color: #62b8f2;
    text-decoration: underline;
    font-size: 24px;
    margin: 0 0 4px 9px;
}
.foot-dot {
    width: 5px;
    height: 8px;
    border-radius: 50%;
    background-color: #6c6c6e;
}
.d1 { margin: 6px 21px 0 23px; }
.d2 { margin: 6px 0 0 255px; }
.d3 { margin: 0 0 0 255px; }
.foot-tick {
    position: absolute;
    left: 938px;
    top: 36px;
    width: 3px;
    height: 6px;
    background-color: #d8d8d8;
}
.foot-device {
    margin-left: 951px;
    white-space: nowrap;
    font-size: 25px;
}
.foot-tools {
    margin-left: auto;
    margin-right: 53px;
    display: flex;
    gap: 60px;
}
.foot-tools .m-icon {
    width: 36px;
    height: 36px;
}
.tool-outline {
    width: 36px;
    height: 36px;
    flex: none;
    fill: none;
    stroke: #c8c8cc;
    stroke-width: 1.700;
}

/* Blue status bar */
.statusbar {
    height: 43px;
    flex: none;
    display: flex;
    align-items: center;
    background-color: #5291bb;
    border-top: 2px solid #2f3a42;
    border-radius: 0 0 21px 21px;
    color: white;
    font-family: 'Inter', sans-serif;
}
.st-text {
    font-size: 24px;
    white-space: nowrap;
}
.st-icon {
    fill: none;
    stroke: white;
    stroke-width: 2;
    flex: none;
}
.remote { width: 22px; height: 24px; margin-left: 25px; }
.device { width: 22px; height: 28px; margin-left: 42px; }
.project { margin-left: 11px; }
.branch { width: 26px; height: 32px; margin-left: 17px; }
.branch .star-bg { fill: #5291bb; }
.branch-name { margin-left: 9px; }
.sync { width: 24px; height: 28px; margin-left: 17px; }
.problem { width: 28px; height: 28px; margin-left: 11px; }
.p-err { margin-left: 37px; }
.count { margin-left: 11px; }
.st-right {
    margin-left: auto;
    margin-right: 23px;
    display: flex;
    align-items: center;
}
.copilot { width: 30px; height: 30px; stroke-width: 2.500; }
.device-name { margin-left: 33px; }
.bell { width: 26px; height: 32px; margin-left: 36px; }
.bell-dot { fill: white; stroke: none; }

/* Chart hover tooltip */
.chart-tooltip {
    position: absolute;
    left: 1598px;
    top: 457px;
    width: 450px;
    height: 292px;
    background-color: #1b1b1f;
    border: 4px solid #3a3a3d;
    border-radius: 30px;
    padding-top: 7px;
    font-size: 20px;
    letter-spacing: 0.5px;
    color: #c0c0c4;
    z-index: 5;
}
.tip-time {
    text-align: center;
    height: 38px;
    line-height: 36px;
}
.tip-row {
    display: flex;
    align-items: center;
    height: 36px;
    white-space: nowrap;
    padding-left: 10px;
}
.tip-dash {
    width: 43px;
    height: 4px;
    margin-right: 11px;
}
.tip-dash.orange { background: repeating-linear-gradient(90deg, #e8842c 0 10px, transparent 10px 16px); }
.tip-dash.gray { background: repeating-linear-gradient(90deg, #c8c8c8 0 10px, transparent 10px 16px); }
.tip-dash.mint { background: repeating-linear-gradient(90deg, #5edc78 0 10px, transparent 10px 16px); }
.tip-dash.coral { background: repeating-linear-gradient(90deg, #e85050 0 10px, transparent 10px 16px); }
.tip-block {
    width: 41px;
    height: 12px;
    margin-left: 2px;
    margin-right: 13px;
}
.tip-block.blue { background-color: #4fa8d8; }
.tip-block.sky { background-color: #74d6fc; }

/* Isolate dropdown menu */
.isolate-menu {
    position: absolute;
    left: 1010px;
    top: 748px;
    width: 560px;
    height: 992px;
    background-color: #1c1c21;
    border-radius: 10px;
    padding-top: 16px;
    box-shadow: 0 4px 12px rgba(0, 0, 0, 0.3);
    z-index: 6;
}
.iso-item {
    height: 96px;
    display: flex;
    align-items: center;
    padding: 2px 0 0 23px;
    font-size: 24px;
    font-weight: 500;
    letter-spacing: 0.25px;
    color: #c8c8cc;
    white-space: nowrap;
}
.iso-item.on {
    background-color: #48484b;
}
.iso-icon {
    width: 48px;
    height: 48px;
    fill: #c8c8cc;
    margin-right: 17px;
    margin-top: -2px;
}
```
